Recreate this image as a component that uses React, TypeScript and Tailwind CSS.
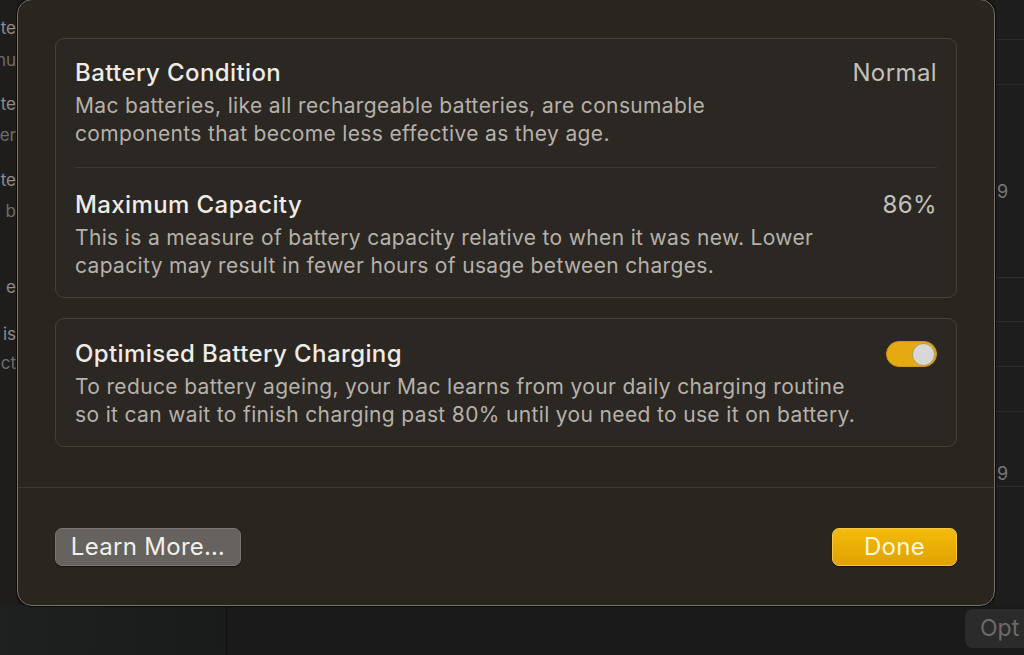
import { useState } from 'react'

const font = { fontFamily: 'Inter, "Noto Sans", "Liberation Sans", sans-serif' }

// tails of the settings rows that peek out left of the sheet
const leftRows = [
  { text: 'te', mt: 'mt-[17px]', dim: false },
  { text: 'nu', mt: 'mt-[10px]', dim: true },
  { text: 'te', mt: 'mt-[22px]', dim: false },
  { text: 'er', mt: 'mt-[9px]', dim: true },
  { text: 'te', mt: 'mt-[23px]', dim: false },
  { text: 'b', mt: 'mt-[9px]', dim: true },
  { text: 'e', mt: 'mt-[54px]', dim: false },
  { text: 'is', mt: 'mt-[25px]', dim: false },
  { text: 'ct', mt: 'mt-[7px]', dim: true },
]

function Toggle() {
  const [on, setOn] = useState(true)
  return (
    <button
      onClick={() => setOn(!on)}
      className={`flex h-[26px] w-[51px] shrink-0 items-center rounded-full border border-[#c99a1c] px-[1px] ${on ? 'justify-end bg-[#e5a912]' : 'justify-start bg-[#55514c]'}`}
    >
      <span className="h-[23px] w-[23px] rounded-full border border-[#b59a55] bg-[#d9d8d6]" />
    </button>
  )
}

function Row({ title, value, children, toggle }: { title: string; value?: string; children: React.ReactNode; toggle?: boolean }) {
  return (
    <div>
      <div className="flex items-center justify-between">
        <h3 className="text-[24px] leading-[28px] font-medium tracking-[0.4px] text-[#efebe7]">{title}</h3>
        {value && <span className="text-[24px] leading-[28px] tracking-[0.4px] text-[#c4c0bb]">{value}</span>}
        {toggle && <Toggle />}
      </div>
      <p className="mt-[5px] text-[21px] leading-[28px] tracking-[0.35px] text-[#b6b1ab]">{children}</p>
    </div>
  )
}

export default function App() {
  return (
    <div style={font} className="relative h-[655px] w-[1024px] overflow-hidden bg-[#1b1a19]">
      {/* settings window behind the sheet */}
      <div className="flex h-[605px]">
        <div className="flex w-[17px] flex-col bg-[#1e1d1c]">
          {leftRows.map((r, i) => (
            <div key={i} className={`flex h-[22px] justify-end ${r.mt}`}>
              <span className={`whitespace-nowrap pr-[1px] text-[17px] leading-[22px] ${r.dim ? 'text-[#6f6c69]' : 'text-[#8f8c89]'}`}>{r.text}</span>
            </div>
          ))}
        </div>
        <div className="flex-1" />
        <div className="flex w-[29px] flex-col bg-[#1d1d1d] text-[18px] text-[#7a7876]">
          <div className="h-[40px] border-b border-[#2c2c2c]" />
          <div className="h-[45px] border-b border-[#2c2c2c]" />
          <div className="flex h-[193px] items-center border-b border-[#2c2c2c] pl-[2px] pt-[20px]">9</div>
          <div className="h-[44px] border-b border-[#2c2c2c]" />
          <div className="h-[45px] border-b border-[#2c2c2c]" />
          <div className="h-[45px] border-b border-[#2c2c2c]" />
          <div className="flex h-[75px] items-end border-b border-[#2c2c2c] pl-[2px] leading-[24px]">9</div>
        </div>
      </div>
      <div className="flex h-[50px]">
        <div className="w-[227px] border-r border-[#0f0f0f] bg-gradient-to-r from-[#1f2020] to-[#191a1a]" />
        <div className="flex flex-1 justify-end bg-[#1a1a1a] pt-[4px]">
          <div className="h-[39px] w-[59px] rounded-l-[8px] bg-[#2b2b2b] pl-[15px] text-[23px] leading-[39px] text-[#6b6a69]">Opt</div>
        </div>
      </div>

      {/* battery health sheet */}
      <div className="absolute left-[17px] top-[-1px] flex h-[607px] w-[978px] flex-col rounded-[15px] border border-[#77726c] bg-[#29251f] shadow-[0_0_0_1px_#0c0b0a]">
        <div className="flex flex-col gap-[20px] px-[37px] pt-[38px]">
          <div className="rounded-[9px] border border-[#46413b] bg-[#2b2722] px-[19px]">
            <div className="border-b border-[#3c3833] pb-[19px] pt-[20px]">
              <Row title="Battery Condition" value="Normal">
                Mac batteries, like all rechargeable batteries, are consumable
                <br />
                components that become less effective as they age.
              </Row>
            </div>
            <div className="pb-[17px] pt-[23px]">
              <Row title="Maximum Capacity" value="86%">
                This is a measure of battery capacity relative to when it was new. Lower
                <br />
                capacity may result in fewer hours of usage between charges.
              </Row>
            </div>
          </div>
          <div className="rounded-[9px] border border-[#46413b] bg-[#2b2722] px-[19px] pb-[17px] pt-[21px]">
            <Row title="Optimised Battery Charging" toggle>
              To reduce battery ageing, your Mac learns from your daily charging routine
              <br />
              so it can wait to finish charging past 80% until you need to use it on battery.
            </Row>
          </div>
        </div>
        <div className="mt-[40px] border-t border-[#3d3934]" />
        <div className="flex items-center justify-between px-[37px] pt-[40px]">
          <button className="h-[38px] w-[186px] rounded-[7px] border border-[#7b7671] bg-[#66625d] text-[24px] tracking-[0.3px] text-[#f2f0ee] shadow-[0_1px_1px_#00000080]">
            Learn More…
          </button>
          <button className="h-[38px] w-[125px] rounded-[7px] border border-[#f6c84a] bg-gradient-to-b from-[#f3bb0b] to-[#e0a200] text-[24px] tracking-[0.3px] text-[#fff6de] shadow-[0_1px_1px_#00000080]">
            Done
          </button>
        </div>
      </div>
    </div>
  )
}
